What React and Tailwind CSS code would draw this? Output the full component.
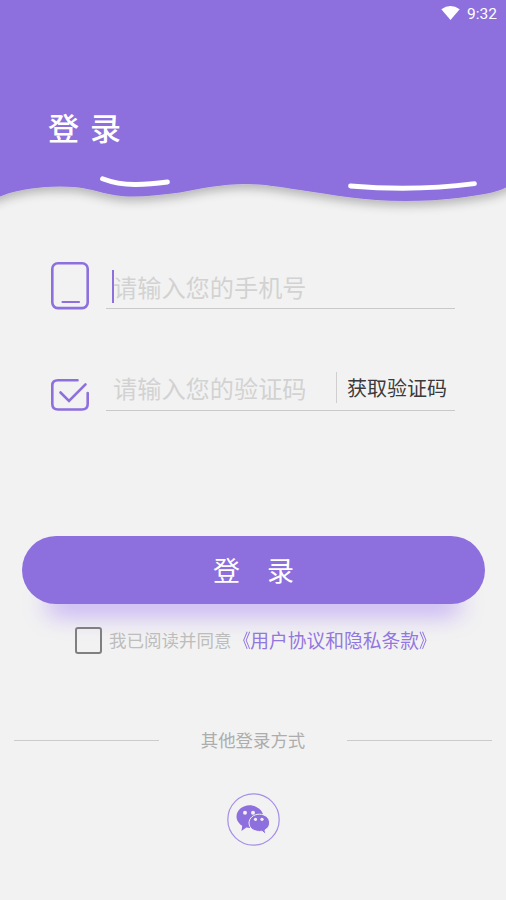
const CJK = "font-['Noto_Sans_CJK_SC',sans-serif]";

function StatusBar() {
  return (
    <div className="flex h-[26px] items-center justify-end gap-[7px] pr-[9px] font-[Roboto,sans-serif] text-[15.500px] text-white">
      <svg className="-mt-px h-[14px] w-[19px]" viewBox="0 0 19 14" fill="#fff">
        <path d="M0.300 3.200Q9.500-3.200 18.700 3.200L9.500 14Z" />
      </svg>
      <span className="mt-[3px] leading-none">9:32</span>
    </div>
  );
}

function Wave() {
  return (
    <svg className="block h-[40px] w-full overflow-visible" viewBox="0 170 506 40" fill="none">
      <defs>
        <filter id="waveShadow" x="-5%" y="-30%" width="110%" height="190%">
          <feDropShadow dx="0" dy="5" stdDeviation="5" floodColor="#000" floodOpacity="0.24" />
        </filter>
        <clipPath id="belowHeader">
          <rect x="0" y="170" width="506" height="70" />
        </clipPath>
      </defs>
      <g clipPath="url(#belowHeader)">
        <path
          d="M-20 130H526V178L506 187.500C497 192.500 480 195 462 197.500C443 200 424 201 405 201C365 201 330 194.500 300 190C280 187 263 184 246 184C222 184 201 188.500 180 192.500C163 194.500 148 196.500 133 196.500C120 196.500 110 194.500 100 192C90 189.500 80 186.500 60 186.500C40 186.500 22 189.500 8 193.500L0 196.500L-20 202Z"
          fill="#8d6fdd"
          filter="url(#waveShadow)"
        />
      </g>
      <path d="M102.500 178.800Q118 184.700 136 184.500Q150 184.300 167.500 182" stroke="#fff" strokeWidth="4.800" strokeLinecap="round" />
      <path d="M350.500 186Q414 191.500 474.500 183.700" stroke="#fff" strokeWidth="4.800" strokeLinecap="round" />
    </svg>
  );
}

function PhoneIcon() {
  return (
    <svg className="mt-px h-[48px] w-[38px]" viewBox="0 0 38 48" fill="none" stroke="#8d6fdd">
      <rect x="1.300" y="1.300" width="35.400" height="44.800" rx="5.500" strokeWidth="2.600" />
      <path d="M11.500 40H28" strokeWidth="2.200" strokeLinecap="round" />
    </svg>
  );
}

function CheckIcon() {
  return (
    <svg className="h-[33px] w-[38px]" viewBox="0 0 38 33" fill="none" stroke="#8d6fdd" strokeWidth="2.600" strokeLinecap="round">
      <path d="M26.500 2.200H7Q1.300 2.200 1.300 7.500V26Q1.300 31.500 7 31.500H31Q36.700 31.500 36.700 26V15" />
      <path d="M9.500 14.500L18 23L34.500 6.300" />
    </svg>
  );
}

function WechatIcon() {
  return (
    <svg className="h-[54px] w-[54px]" viewBox="0 0 54 54">
      <circle cx="26.500" cy="26.500" r="25.700" fill="none" stroke="#a58fe6" strokeWidth="1.200" />
      <path d="M22.500 12.300C15.500 12.300 9.500 17.300 9.500 23.600C9.500 27.200 11.800 30.800 15.200 32.800L14.500 38L19.300 34.500C29 36.500 36.300 30.500 36.300 23.600C36.300 17.300 29.500 12.300 22.500 12.300Z" fill="#8d6fdd" />
      <circle cx="18" cy="19.800" r="2" fill="#f2f2f2" />
      <circle cx="26" cy="19.800" r="2" fill="#f2f2f2" />
      <path d="M32.400 21.200C26.500 21.200 22 25 22 30C22 35.700 28 39.500 35 38.200L38.700 41.500L38 37C41 35.300 42.600 32.900 42.600 30C42.600 25 38.300 21.200 32.400 21.200Z" fill="#8d6fdd" stroke="#f2f2f2" strokeWidth="1" />
      <circle cx="28.500" cy="26.300" r="1.600" fill="#f2f2f2" />
      <circle cx="35" cy="26.300" r="1.600" fill="#f2f2f2" />
    </svg>
  );
}

export default function App() {
  return (
    <div className={`flex h-[900px] w-[506px] flex-col overflow-hidden bg-[#f2f2f2] ${CJK}`}>
      <header className="shrink-0">
        <div className="h-[170px] bg-[#8d6fdd]">
          <StatusBar />
          <h1 className="flex gap-[11px] pt-[79px] pl-[48px] text-[31px] leading-[44px] font-medium text-white">
            <span>登</span>
            <span>录</span>
          </h1>
        </div>
        <Wave />
      </header>

      <main className="flex flex-col">
        <div className="mt-[51px] flex h-[48px] pl-[51px]">
          <PhoneIcon />
          <div className="ml-[17px] flex h-[48px] w-[349px] items-start border-b border-[#c9c9c9] pl-[6px]">
            <span className="mt-[9px] h-[33px] w-[2px] bg-[#8d6fdd]" />
            <span className="mt-[8px] -ml-px text-[24.200px] leading-[36px] text-[#d2d2d2]">请输入您的手机号</span>
          </div>
        </div>

        <div className="mt-[60px] flex h-[42px] items-end pl-[51px]">
          <CheckIcon />
          <div className="ml-[17px] flex h-[42px] w-[349px] items-start border-b border-[#c9c9c9] pl-[7px]">
            <span className="w-[223px] text-[24.200px] leading-[37px] text-[#d2d2d2]">请输入您的验证码</span>
            <span className="mt-[3px] h-[31px] w-px bg-[#cfcfcf]" />
            <button className="ml-[10px] text-[20px] leading-[38px] text-[#3a3a3a]">获取验证码</button>
          </div>
        </div>

        <button className="mt-[125px] ml-[22px] flex h-[68px] w-[463px] items-center justify-center gap-[27px] rounded-full bg-[#8d6fdd] text-[27px] leading-[40px] text-white shadow-[0_34px_24px_-24px_#bea6f5]">
          <span>登</span>
          <span>录</span>
        </button>

        <div className="mt-[22px] flex h-[28px] items-center pl-[75px]">
          <span className="h-[27px] w-[27px] rounded-[3px] border-2 border-[#808080]" />
          <span className="ml-[7px] text-[17.500px] leading-[28px] text-[#bdbdbd]">我已阅读并同意</span>
          <span className="flex text-[18.750px] leading-[28px] text-[#9377e0]">
            <span className="origin-right scale-x-[0.850]">《</span>
            <span>用户协议和隐私条款</span>
            <span className="origin-left scale-x-[0.850]">》</span>
          </span>
        </div>

        <div className="mt-[71px] flex h-[30px] items-center justify-between px-[14px]">
          <span className="h-px w-[145px] bg-[#cbcbcb]" />
          <span className="text-[17.400px] leading-[30px] text-[#adadad]">其他登录方式</span>
          <span className="h-px w-[145px] bg-[#cbcbcb]" />
        </div>

        <div className="mt-[38px] flex justify-center pl-[2px]">
          <WechatIcon />
        </div>
      </main>
    </div>
  );
}
